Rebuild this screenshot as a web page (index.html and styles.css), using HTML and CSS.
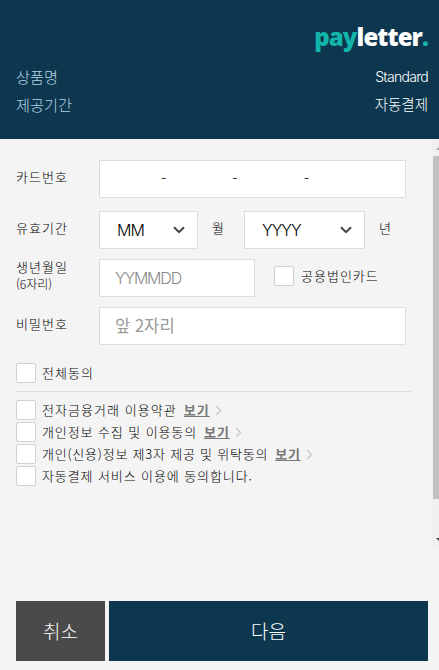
FILE: index.html
```html
<!DOCTYPE html>
<html lang="ko">
<head>
<meta charset="utf-8">
<title>payletter</title>
<link rel="stylesheet" href="styles.css">
</head>
<body>
<header class="header">
  <div class="logo"><b>pay</b>letter<b>.</b></div>
  <div class="info"><span class="key">상품명</span><span class="latin">Standard</span></div>
  <div class="info"><span class="key">제공기간</span><span>자동결제</span></div>
</header>
<div class="scroller">
<main class="form">
  <div class="row">
    <span class="label">카드번호</span>
    <div class="field card"><span>-</span><span>-</span><span>-</span></div>
  </div>
  <div class="row expiry">
    <span class="label">유효기간</span>
    <div class="field select month"><span>MM</span><svg width="12" height="8" viewBox="0 0 12 8"><path d="M1 1.2 6 6.2 11 1.2"/></svg></div>
    <span class="unit unit-month">월</span>
    <div class="field select year"><span>YYYY</span><svg width="12" height="8" viewBox="0 0 12 8"><path d="M1 1.2 6 6.2 11 1.2"/></svg></div>
    <span class="unit">년</span>
  </div>
  <div class="row">
    <span class="label two-line">생년월일<small>(6자리)</small></span>
    <div class="field birth">YYMMDD</div>
    <i class="box corp-box"></i><span class="corp">공용법인카드</span>
  </div>
  <div class="row">
    <span class="label">비밀번호</span>
    <div class="field password">앞 2자리</div>
  </div>
  <div class="agree all"><i class="box"></i><span>전체동의</span></div>
  <div class="agree"><i class="box"></i><span>전자금융거래 이용약관</span><a>보기</a><svg width="7" height="11" viewBox="0 0 7 11"><path d="M1 1 5.5 5.5 1 10"/></svg></div>
  <div class="agree second"><i class="box"></i><span>개인정보 수집 및 이용동의</span><a>보기</a><svg width="7" height="11" viewBox="0 0 7 11"><path d="M1 1 5.5 5.5 1 10"/></svg></div>
  <div class="agree third"><i class="box"></i><span>개인(신용)정보 제3자 제공 및 위탁동의</span><a>보기</a><svg width="7" height="11" viewBox="0 0 7 11"><path d="M1 1 5.5 5.5 1 10"/></svg></div>
  <div class="agree second"><i class="box"></i><span>자동결제 서비스 이용에 동의합니다.</span></div>
</main>
<div class="scrollbar">
  <svg width="7" height="17" viewBox="0 0 7 17"><path d="M4 11 8 7 12 11z" fill="#999"/></svg>
  <div class="thumb"></div>
  <svg class="down" width="7" height="17" viewBox="0 0 7 17"><path d="M4 6 8 10 12 6z" fill="#444"/></svg>
</div>
</div>
<footer class="actions">
  <div class="btn cancel">취소</div>
  <div class="btn next">다음</div>
</footer>
</body>
</html>
```

FILE: styles.css
```css
* { box-sizing: border-box; }
body {
  margin: 0;
  height: 670px;
  overflow: hidden;
  background: #f4f4f4;
  color: #000;
  font: 300 13px/20px "Noto Sans CJK KR", sans-serif;
}
.header {
  height: 139px;
  padding: 19px 11px 0 16px;
  background: #0d374f;
  color: #fff;
}
.logo {
  height: 36px;
  margin: 0 0 7px;
  text-align: right;
  font: 800 24px/36px "Open Sans", sans-serif;
  letter-spacing: -0.9px;
}
.logo b { font-weight: inherit; color: #13b5aa; }
.info {
  display: flex;
  justify-content: space-between;
  height: 28px;
  line-height: 28px;
  font-size: 14.5px;
}
.key { color: #b5d3e3; font-size: 15.2px; }
.latin { font-family: Inter, sans-serif; font-size: 14px; line-height: 30px; letter-spacing: -0.7px; }
.scroller { display: flex; height: 410px; }
.form { flex: 1; padding: 21px 21px 0 16px; }
.row { display: flex; align-items: center; height: 38px; margin-bottom: 10px; }
.row:first-child { margin-bottom: 13px; }
.label { width: 83px; letter-spacing: 1px; line-height: 17px; padding-bottom: 6px; }
.two-line { padding-bottom: 6px; }
.label small { display: block; font-size: 12px; letter-spacing: 0; }
.field {
  height: 38px;
  border: 1px solid #ddd;
  background: #fff;
  padding: 0 15px;
  font-size: 16px;
  line-height: 35px;
}
.card { width: 307px; padding: 0 96px 0 61px; display: flex; justify-content: space-between; }
.select {
  display: flex;
  align-items: center;
  justify-content: space-between;
  padding: 0 12px 0 17px;
  font-family: Inter, sans-serif;
  letter-spacing: -1px;
}
.select svg { fill: none; stroke: #444; stroke-width: 2; }
.month { width: 99px; }
.year { width: 121px; }
.unit { margin-left: 14px; padding-bottom: 4px; }
.unit-month { width: 32px; }
.birth {
  width: 156px;
  color: #888;
  margin-right: 19px;
  font-family: Inter, sans-serif;
  line-height: 37px;
  letter-spacing: -1.2px;
  word-spacing: 0;
}
.password { width: 307px; color: #999; font-weight: 400; font-size: 16.6px; }
.box {
  width: 20px;
  height: 20px;
  border: 1px solid #d2d2d2;
  border-radius: 2px;
  background: #fff;
  flex: none;
}
.corp-box { margin-bottom: 5px; }
.corp { margin: 0 0 4px 7px; letter-spacing: 1px; }
.agree { display: flex; align-items: center; height: 22px; letter-spacing: 1.05px; white-space: nowrap; }
.agree span { margin-left: 6px; }
.agree a { margin: 0 5px 0 7px; font-weight: 700; color: #777; text-decoration: underline; }
.agree svg { fill: none; stroke: #ccc; stroke-width: 1.5; }
.agree.second { letter-spacing: 0.9px; }
.third { letter-spacing: 0.78px; }
.all { height: 37px; margin: 10px 0 7px; padding-bottom: 1px; border-bottom: 1px solid #ddd; }
.scrollbar { width: 7px; background: #f0f0f0; display: flex; flex-direction: column; }
.scrollbar svg { display: block; }
.thumb { height: 343px; margin-left: 1px; background: #c1c1c1; }
.down { margin-top: auto; }
.actions { display: flex; gap: 4px; margin: 52px 11px 0 16px; }
.btn { height: 60px; line-height: 60px; font-size: 19px; text-align: center; color: #fff; }
.cancel { width: 89px; background: #4a4a4a; }
.next { flex: 1; background: #0d374f; }
```
